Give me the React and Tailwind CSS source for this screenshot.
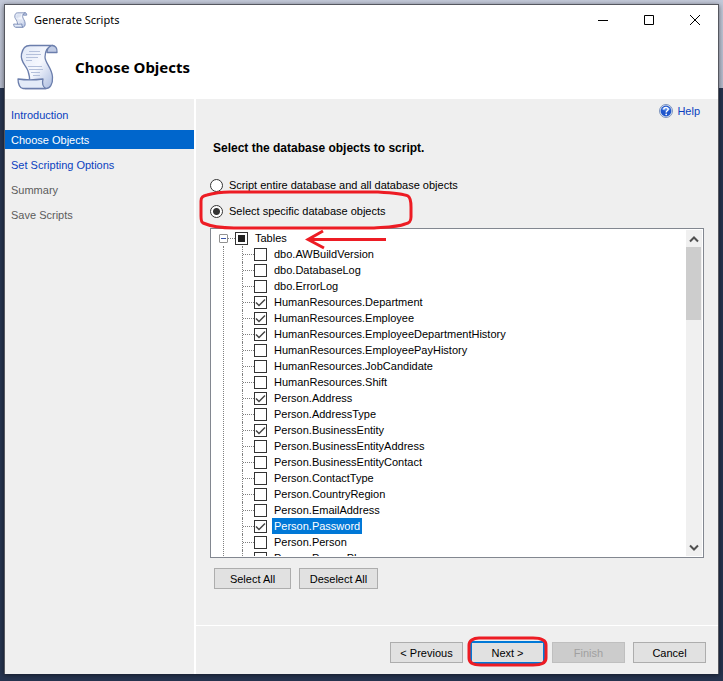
import { useState } from "react";

const STEPS = [
  { name: "Introduction", state: "done" },
  { name: "Choose Objects", state: "current" },
  { name: "Set Scripting Options", state: "done" },
  { name: "Summary", state: "pending" },
  { name: "Save Scripts", state: "pending" },
];

const STEP_STYLES = {
  done: "text-[#0a3fc0]",
  current: "bg-[#0066cc] text-white",
  pending: "text-[#5c5c5c]",
};

const TABLES = [
  "dbo.AWBuildVersion",
  "dbo.DatabaseLog",
  "dbo.ErrorLog",
  "HumanResources.Department",
  "HumanResources.Employee",
  "HumanResources.EmployeeDepartmentHistory",
  "HumanResources.EmployeePayHistory",
  "HumanResources.JobCandidate",
  "HumanResources.Shift",
  "Person.Address",
  "Person.AddressType",
  "Person.BusinessEntity",
  "Person.BusinessEntityAddress",
  "Person.BusinessEntityContact",
  "Person.ContactType",
  "Person.CountryRegion",
  "Person.EmailAddress",
  "Person.Password",
  "Person.Person",
  "Person.PersonPhone",
];

const INITIAL_CHECKED = [
  "HumanResources.Department",
  "HumanResources.Employee",
  "HumanResources.EmployeeDepartmentHistory",
  "Person.Address",
  "Person.BusinessEntity",
  "Person.Password",
];

export default function App() {
  const [mode, setMode] = useState("specific");
  const [checked, setChecked] = useState(INITIAL_CHECKED);
  const [selected, setSelected] = useState("Person.Password");

  const toggle = (name) => {
    setSelected(name);
    setChecked((prev) =>
      prev.includes(name) ? prev.filter((n) => n !== name) : [...prev, name]
    );
  };

  const allChecked = checked.length === TABLES.length;
  const someChecked = checked.length > 0 && !allChecked;

  return (
    <div className="h-screen bg-[#26344f] bg-[linear-gradient(#c3c9d9,#b4bacb)] bg-[length:100%_88px] bg-no-repeat pt-1 pr-1 pb-[7px] pl-1 font-['Liberation_Sans',Arial,sans-serif] text-[11px] text-black">
      <div className="flex h-full flex-col border border-b-0 border-[#55575f] bg-white shadow-[0_1px_5px_rgba(0,0,0,0.5)]">
        {/* Title bar */}
        <div className="flex h-[30px] shrink-0 items-center pl-2">
          <ScrollIcon className="h-4 w-4" strokeWidth={2.4} />
          <span className="ml-[5px] flex-1 font-['Noto_Sans',sans-serif] text-[11px]">
            Generate Scripts
          </span>
          <WindowButton label="Minimize">
            <path d="M0 5.5H10" />
          </WindowButton>
          <WindowButton label="Maximize">
            <path d="M.5 .5H9.5V9.5H.5Z" />
          </WindowButton>
          <WindowButton label="Close">
            <path d="M0 0L10 10M10 0L0 10" />
          </WindowButton>
        </div>

        {/* Page header */}
        <div className="flex h-16 shrink-0 items-center pl-[11px]">
          <ScrollIcon className="h-12 w-12" strokeWidth={1.3} />
          <h1 className="ml-[11px] font-['Noto_Sans',sans-serif] text-[15px] font-bold">
            Choose Objects
          </h1>
        </div>

        <div className="flex min-h-0 flex-1">
          {/* Steps */}
          <nav className="flex w-[189px] shrink-0 flex-col gap-1.5 bg-[#efefef] pt-1.5">
            {STEPS.map((step) => (
              <a
                key={step.name}
                href="#"
                className={`h-[19px] pl-1.5 leading-5 ${STEP_STYLES[step.state]}`}
              >
                {step.name}
              </a>
            ))}
          </nav>

          <div className="ml-0.5 flex min-w-0 flex-1 flex-col bg-[#efefef]">
            <main className="flex min-h-0 flex-1 flex-col pr-3.5 pb-9 pl-3.5">
              <a
                href="#"
                className="mt-1 flex items-center gap-1 self-end pr-1 leading-4 text-[#0a3fc0]"
              >
                <HelpIcon />
                Help
              </a>

              <h2 className="mt-5 pt-px pl-[3px] text-[12px] leading-4 font-bold">
                Select the database objects to script.
              </h2>

              <div className="mt-[21px] flex flex-col gap-2.5">
                <RadioOption
                  label="Script entire database and all database objects"
                  checked={mode === "entire"}
                  onChange={() => setMode("entire")}
                />
                <div className="relative">
                  <RadioOption
                    label="Select specific database objects"
                    checked={mode === "specific"}
                    onChange={() => setMode("specific")}
                  />
                  <svg
                    className="pointer-events-none absolute -top-3.5 -left-3 z-10"
                    width="216"
                    height="42"
                    fill="none"
                    stroke="#ed1c24"
                    strokeWidth="3"
                  >
                    <path d="M32 3H180C196 4 206 5 210 7C213 9 213 14 213 18V28C213 32 212 34 207 35C200 38 192 38 176 39H36C22 39 12 37 5 34C3 33 3 30 3 27V12C3 8 5 7 9 6C16 4 24 3 32 3Z" />
                  </svg>
                </div>
              </div>

              {/* Object tree */}
              <div className="relative mt-[9px] flex min-h-0 flex-1 border border-[#828790] bg-white p-px">
                <ul className="min-w-0 flex-1 overflow-hidden pl-[7px]">
                  <li>
                    <div className="flex h-4 items-center">
                      <button
                        aria-label="Collapse Tables"
                        className="flex h-[9px] w-[9px] items-center justify-center rounded-[1px] border border-[#919191] bg-white"
                      >
                        <span className="h-px w-[5px] bg-[#3a55a8]" />
                      </button>
                      <span className="w-[7px] border-t border-dotted border-[#808080]" />
                      <label className="flex items-center">
                        <Checkbox
                          checked={allChecked}
                          mixed={someChecked}
                          onChange={() => setChecked(allChecked ? [] : TABLES)}
                        />
                        <span className="pl-[7px] leading-4">Tables</span>
                      </label>
                    </div>
                    <ul className="ml-1 border-l border-dotted border-[#808080] pl-[18px]">
                      {TABLES.map((name) => (
                        <li
                          key={name}
                          className="flex h-4 items-center border-l border-dotted border-[#808080]"
                        >
                          <span className="w-[11px] border-t border-dotted border-[#808080]" />
                          <label className="flex items-center">
                            <Checkbox
                              checked={checked.includes(name)}
                              onChange={() => toggle(name)}
                            />
                            <span
                              className={`ml-[5px] px-0.5 leading-4 ${
                                selected === name
                                  ? "bg-[#0078d7] text-white"
                                  : ""
                              }`}
                            >
                              {name}
                            </span>
                          </label>
                        </li>
                      ))}
                    </ul>
                  </li>
                </ul>
                <div className="flex w-4 shrink-0 flex-col bg-[#f0f0f0]">
                  <ScrollButton label="Scroll up" d="M1 6.5L5 2.5L9 6.5" />
                  <div className="flex-1">
                    <div className="mr-px h-[73px] bg-[#cdcdcd]" />
                  </div>
                  <ScrollButton label="Scroll down" d="M1 1.5L5 5.5L9 1.5" />
                </div>
                <svg
                  className="pointer-events-none absolute top-0 left-[94px]"
                  width="84"
                  height="22"
                  fill="none"
                  stroke="#ed1c24"
                  strokeWidth="3"
                >
                  <path d="M81 10.5H4M18 2L3 10.5L19 19" />
                </svg>
              </div>

              <div className="mt-2.5 flex gap-2 pl-1">
                <Button className="w-[77px]" onClick={() => setChecked(TABLES)}>
                  Select All
                </Button>
                <Button className="w-[79px]" onClick={() => setChecked([])}>
                  Deselect All
                </Button>
              </div>
            </main>

            {/* Wizard buttons */}
            <footer className="flex justify-end gap-2 border-t border-white pt-4 pr-3 pb-[11px]">
              <Button className="w-[73px]">&lt; Previous</Button>
              <div className="relative">
                <Button className="w-[73px] outline-2 -outline-offset-1 outline-[#0078d7]">
                  Next &gt;
                </Button>
                <svg
                  className="pointer-events-none absolute -top-1.5 -left-1"
                  width="81"
                  height="31"
                  fill="none"
                  stroke="#ed1c24"
                  strokeWidth="3"
                >
                  <path d="M12 2H66C73 2 79 4 79 9V22C79 27 73 29 66 29H14C7 29 2 27 2 22V9C2 5 6 2 12 2Z" />
                </svg>
              </div>
              <Button className="w-[73px]" disabled>
                Finish
              </Button>
              <Button className="w-[73px]">Cancel</Button>
            </footer>
          </div>
        </div>
      </div>
    </div>
  );
}

function Button({ className, ...props }) {
  return (
    <button
      className={`h-[21px] border border-[#adadad] bg-[#e1e1e1] text-center leading-5 disabled:border-[#bfbfbf] disabled:bg-[#cccccc] disabled:text-[#a0a0a0] ${className}`}
      {...props}
    />
  );
}

function WindowButton({ label, children }) {
  return (
    <button
      aria-label={label}
      className="flex h-full w-[46px] items-center justify-center"
    >
      <svg width="10" height="10" fill="none" stroke="#000">
        {children}
      </svg>
    </button>
  );
}

function ScrollButton({ label, d }) {
  return (
    <button
      aria-label={label}
      className="flex h-[17px] w-4 items-center justify-center"
    >
      <svg width="10" height="8" fill="none" stroke="#505050" strokeWidth="2">
        <path d={d} />
      </svg>
    </button>
  );
}

function RadioOption({ label, checked, onChange }) {
  return (
    <label className="flex h-4 w-fit items-center">
      <input
        type="radio"
        name="mode"
        checked={checked}
        onChange={onChange}
        className="h-[13px] w-[13px] appearance-none rounded-full border border-[#333] bg-white checked:bg-[radial-gradient(circle,#333_3px,white_4px)]"
      />
      <span className="pl-1.5 leading-4">{label}</span>
    </label>
  );
}

function Checkbox({ checked, mixed, onChange }) {
  return (
    <span className="grid h-[13px] w-[13px] shrink-0 place-items-center">
      <input
        type="checkbox"
        checked={checked}
        onChange={onChange}
        className="col-start-1 row-start-1 h-[13px] w-[13px] appearance-none border border-[#333] bg-white"
      />
      {mixed && (
        <span className="pointer-events-none z-0 col-start-1 row-start-1 h-[7px] w-[7px] bg-[#222]" />
      )}
      {checked && (
        <svg
          className="pointer-events-none z-0 col-start-1 row-start-1"
          width="11"
          height="11"
          fill="none"
          stroke="#444"
          strokeWidth="1.5"
        >
          <path d="M1 5.5L4 8.5L10 2.5" />
        </svg>
      )}
    </span>
  );
}

function HelpIcon() {
  return (
    <svg width="14" height="14" viewBox="0 0 14 14">
      <circle cx="7" cy="7" r="6.5" fill="#dfe6f2" stroke="#7d94bd" />
      <circle cx="7" cy="7" r="5.4" fill="#1f56cc" />
      <path
        d="M2.5 5.5C3.5 2 10.5 2 11.5 5.5C9 7 5 7 2.5 5.5Z"
        fill="#5d8fe8"
      />
      <path
        d="M4.8 5.4C4.8 3 9.2 3 9.2 5.3C9.2 6.8 7.2 6.7 7.2 8.5"
        fill="none"
        stroke="#fff"
        strokeWidth="1.5"
      />
      <circle cx="7.2" cy="10.3" r="0.9" fill="#fff" />
    </svg>
  );
}

function ScrollIcon({ className, strokeWidth }) {
  return (
    <svg className={className} viewBox="0 0 48 48">
      <defs>
        <linearGradient id="paper" x1="0" y1="0" x2="1" y2="1">
          <stop offset="0" stopColor="#dfe7f6" />
          <stop offset="0.5" stopColor="#f6f8fe" />
          <stop offset="1" stopColor="#a9bade" />
        </linearGradient>
      </defs>
      <g stroke="#6b7eac" strokeWidth={strokeWidth} strokeLinejoin="round">
        <path
          d="M14 2.5H37C31 4 29 8 29 14C29 20 36 25 36.5 34C37 41 34 46 29 45.5H9C15 42 14 34 12 28C10 22 4 19 5.5 11C7 5 9 2.5 14 2.5Z"
          fill="url(#paper)"
        />
        <path
          d="M36 2.5C39.5 2.5 41.5 5 41 9.5H31C31 6 33 3.5 36 2.5Z"
          fill="#c0cbe4"
        />
        <path
          d="M2 36C9 37 19 37 27 36C26 40 27 44 30 45.5H7C4 45.5 2 41 2 36Z"
          fill="#e3ebf8"
        />
      </g>
      <path
        d="M13 8.5H24M10 11.5H25M10 14.5H22M10 17.5H16M12 23.5H26M13 26.5H27M15 29.5H24M17 32.5H24"
        stroke="#b4c0db"
      />
    </svg>
  );
}
